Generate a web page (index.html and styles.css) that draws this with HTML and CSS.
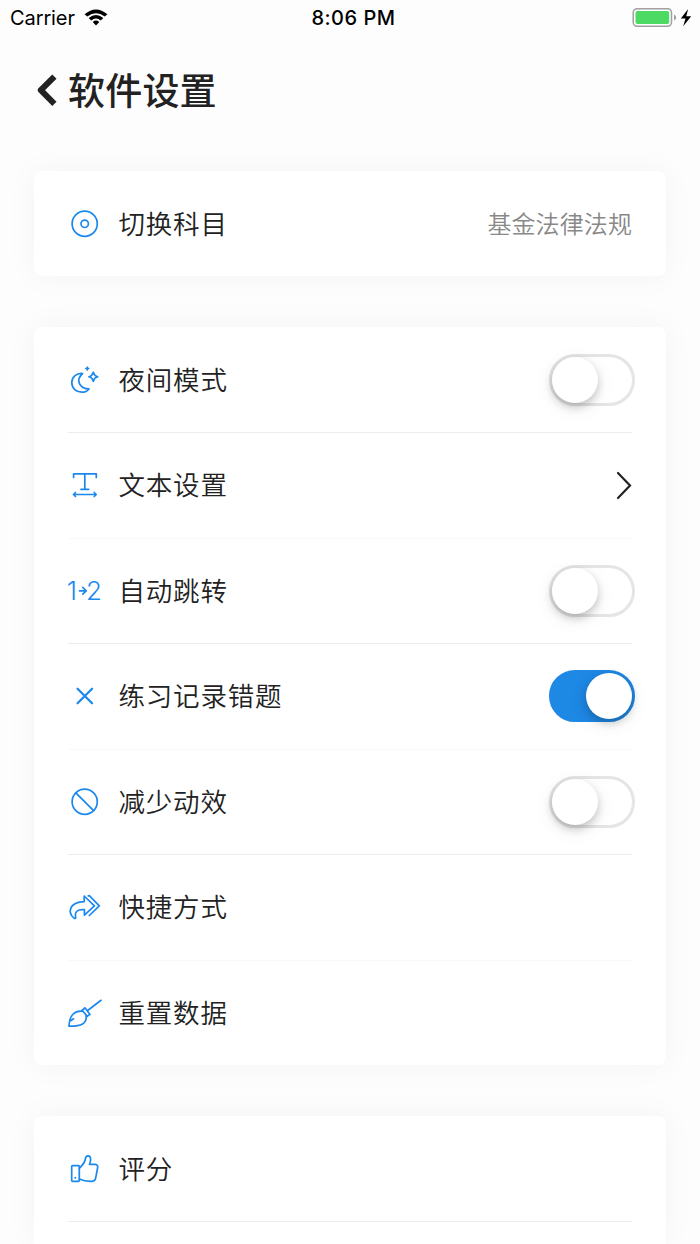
FILE: index.html
```html
<!DOCTYPE html>
<html lang="zh-CN">
<head>
<meta charset="utf-8">
<title>软件设置</title>
<link rel="stylesheet" href="styles.css">
</head>
<body>
<div class="status">
  <div class="carrier"><span>Carrier</span>
    <svg width="24" height="18" viewBox="0 0 24 18"><path d="M.6 5.200Q12-4.400 23.400 5.200L20.700 7.600Q12 .8 3.300 7.600ZM4.700 9Q12 2.800 19.300 9L16.700 11.400Q12 7.800 7.300 11.400ZM8.700 13Q12 10.200 15.300 13L12 16.600Z"/></svg>
  </div>
  <div class="time">8:06 PM</div>
  <div class="power">
    <svg width="62" height="22" viewBox="0 0 62 22"><rect x="1.2" y="1.700" width="38.300" height="17.600" rx="4" fill="none" stroke="#a0a0a0" stroke-width="1.500"/><rect x="3.500" y="4" width="33.700" height="13" rx="2" fill="#4cd964"/><path d="M42 7.500Q44.200 8.500 44.200 10.500T42 13.500Z" fill="#a0a0a0"/><path d="M56.200 2L48.800 11.600H53.500L51.200 19.200L59.200 9.200H54.200Z"/></svg>
  </div>
</div>
<header class="header">
  <svg class="back" width="22" height="34" viewBox="0 0 22 34"><path d="M18.400 3.600L4.800 17.200L18.400 30.800"/></svg>
  <h1 class="title">软件设置</h1>
</header>
<main class="cards">
  <section class="card">
    <div class="row"><svg class="icon" viewBox="0 0 34 34"><circle cx="16.700" cy="16.800" r="12.600"/><circle cx="16.700" cy="16.800" r="3.700"/></svg><span class="label">切换科目</span><span class="value">基金法律法规</span></div>
  </section>
  <section class="card">
    <div class="row"><svg class="icon" viewBox="0 0 34 34"><path d="M14.600 10.500C8 10 3.800 14.200 3.800 19.600C3.800 25.300 8.200 29.200 13.800 29.200C17 29.200 19.400 28 21 25.900C11.500 25.700 7.200 17 14.600 10.500Z"/><path d="M25.300 9.300Q26.200 12.900 29.700 13.800Q26.200 14.700 25.300 18.300Q24.400 14.700 20.900 13.800Q24.400 12.900 25.300 9.300Z"/><path class="solid" d="M19.300 3L20.300 4.600L21.900 5.600L20.300 6.600L19.300 8.200L18.300 6.600L16.700 5.600L18.300 4.600Z"/></svg><span class="label">夜间模式</span><span class="switch"><span class="knob"></span></span></div>
    <div class="row"><svg class="icon" viewBox="0 0 34 34"><path d="M5.600 9.500V5.800H28.300V9.500M16.800 6V21.400M13 21.400H20.700M5.500 26.500H28.200M7.500 24.500L5.500 26.500L7.500 28.500M26.200 24.500L28.200 26.500L26.200 28.500"/></svg><span class="label">文本设置</span><svg class="more" width="18" height="30" viewBox="0 0 18 30"><path d="M4 3L16 15.500L4 28"/></svg></div>
    <div class="row"><svg class="icon" viewBox="0 0 34 34"><text x="-1.200" y="26">1</text><text x="18" y="26">2</text><path d="M11.500 16.800H18M14.800 13.400L18.200 16.800L14.800 20.200"/></svg><span class="label">自动跳转</span><span class="switch"><span class="knob"></span></span></div>
    <div class="row"><svg class="icon" viewBox="0 0 34 34"><path class="bold" d="M9.500 9.700L24.100 24.300M24.100 9.700L9.500 24.300"/></svg><span class="label">练习记录错题</span><span class="switch on"><span class="knob"></span></span></div>
    <div class="row"><svg class="icon" viewBox="0 0 34 34"><circle cx="16.700" cy="16.800" r="12.600"/><path d="M7.800 7.900L25.600 25.700"/></svg><span class="label">减少动效</span><span class="switch"><span class="knob"></span></span></div>
    <div class="row"><svg class="icon" viewBox="0 0 34 34"><path d="M6.300 28.300C-.5 23 .6 12 16.200 11.600V6L26.400 15.800L16.400 25.100V19.600C9 19.100 6.500 21.800 7.700 27.800Q7.200 28.800 6.300 28.300Z"/><path d="M20.300 5.800L21.300 5.700L31.300 15.800L21.300 25.500"/></svg><span class="label">快捷方式</span></div>
    <div class="row"><svg class="icon" viewBox="0 0 34 34"><path d="M33 4.300L20 14.200M16.900 11.800L22 18.400L19.200 20.300L14.200 14.200ZM15.200 15.300C6.500 14 1.300 19.500 .9 30.200C13 30.500 19.500 27.500 18 19.400M2.700 24.700L5.500 22.800"/></svg><span class="label">重置数据</span></div>
  </section>
  <section class="card card-last">
    <div class="row"><svg class="icon" viewBox="0 0 34 34"><rect x="3.700" y="13.600" width="7.600" height="15.700" rx=".8"/><circle class="solid" cx="7.300" cy="25.700" r="1"/><path d="M11.300 16.300C14.500 13 16.800 11.500 17.400 6.800C17.800 3 22.600 2.500 22.600 7.200Q22.600 9.500 21.500 12.300H27.200Q30.300 12.700 29.600 16L27.600 26.400Q27 29.200 24 29.300Q17.500 29.700 11.300 27"/></svg><span class="label">评分</span></div>
    <div class="row row-cut"></div>
  </section>
</main>
</body>
</html>
```
FILE: styles.css
```css
* { box-sizing: border-box; }
body {
  margin: 0;
  height: 1244px;
  overflow: hidden;
  background: #fdfdfd;
  color: #222;
  font-family: "Noto Sans CJK SC", sans-serif;
}
.status {
  display: grid;
  grid-template-columns: 1fr auto 1fr;
  align-items: center;
  height: 36px;
  padding: 0 6px 0 10px;
  color: #000;
  font: 20px/36px Inter, sans-serif;
}
.carrier { display: flex; align-items: center; gap: 9px; letter-spacing: -.1px; }
.time { font-weight: 500; letter-spacing: .5px; padding-left: 3px; }
.power { display: flex; justify-content: flex-end; }
.header { display: flex; align-items: center; height: 108px; padding-left: 36px; gap: 10px; }
.back { fill: none; stroke: #222; stroke-width: 6; stroke-linejoin: round; }
.title { margin: 0; padding-bottom: 3px; font-size: 37px; font-weight: 500; letter-spacing: .2px; line-height: 54px; }
.cards { display: flex; flex-direction: column; gap: 51px; padding: 27px 34px 0; }
.card {
  padding: 0 34px;
  border-radius: 8px;
  background: #fff;
  box-shadow: 0 0 32px rgba(0, 0, 0, .045);
}
.card-last { border-radius: 8px 8px 0 0; }
.row { display: flex; align-items: center; height: 105.5px; }
.row:first-child { height: 105px; }
.row + .row { border-top: 1px solid #f8f8f8; }
.row:nth-child(even) { border-top-color: #ececec; }
.row.row-cut { height: 23px; }
.icon {
  width: 34px;
  height: 34px;
  flex: none;
  overflow: visible;
  fill: none;
  stroke: #1b88ee;
  stroke-width: 1.7;
  stroke-linecap: round;
  stroke-linejoin: round;
}
.icon .bold { stroke-width: 2.2; }
.icon .solid { fill: #1b88ee; stroke: none; }
.icon text { fill: #1b88ee; stroke: none; font: 300 26px Inter, sans-serif; }
.label {
  flex: 1;
  margin-left: 16.5px;
  padding-bottom: 2px;
  font-size: 26.5px;
  font-weight: 350;
  letter-spacing: .8px;
  line-height: 38px;
}
.value { padding-bottom: 2px; color: #888; font-size: 24px; font-weight: 350; letter-spacing: .1px; line-height: 36px; }
.more { fill: none; stroke: #222; stroke-width: 2.2; stroke-linecap: round; }
.switch {
  display: flex;
  width: 86px;
  height: 52px;
  margin-right: -3px;
  border: 3px solid #e5e5e5;
  border-radius: 26px;
}
.knob {
  width: 46px;
  height: 46px;
  border-radius: 50%;
  background: #fff;
  box-shadow: 0 4px 8px rgba(0, 0, 0, .2), 0 5px 20px rgba(0, 0, 0, .08);
}
.switch.on { justify-content: flex-end; border-color: #1e88e5; background: #1e88e5; }
```
